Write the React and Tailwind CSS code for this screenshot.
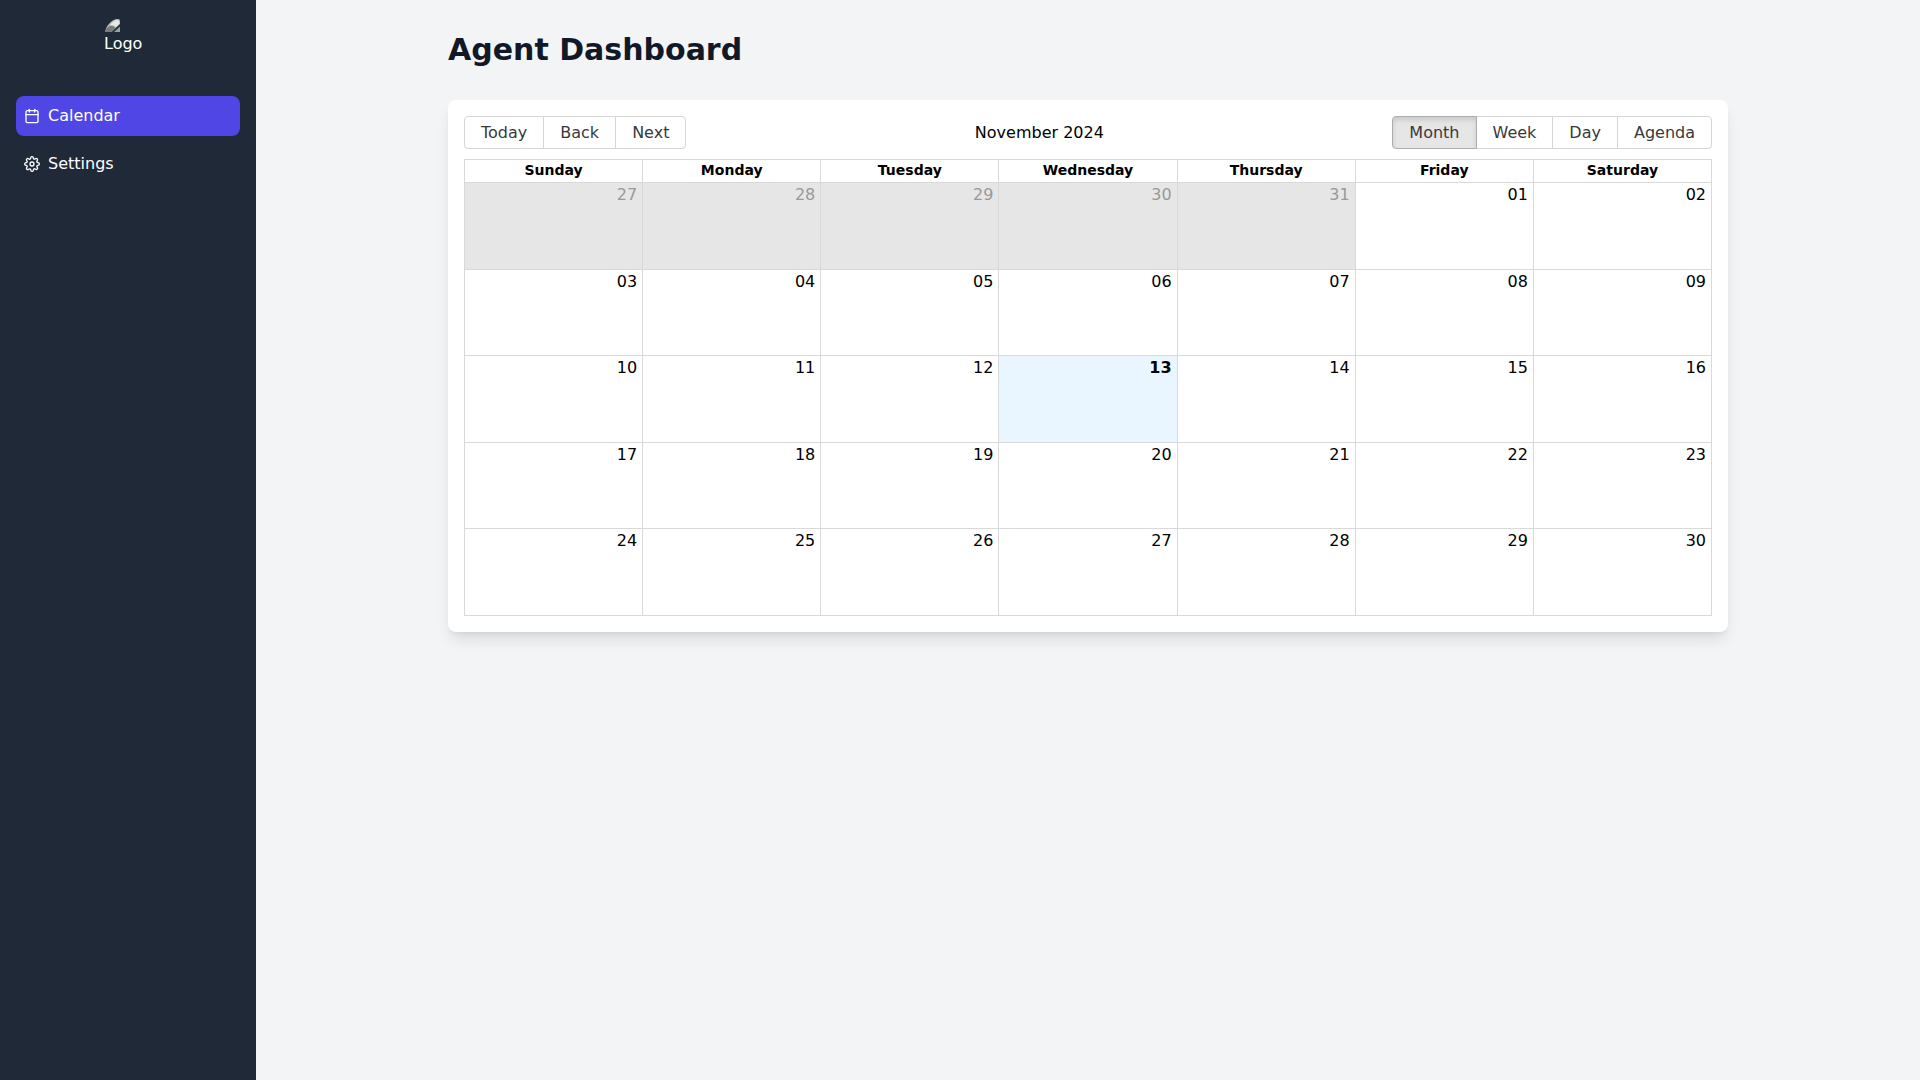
import React, { useState } from 'react';
import { FiCalendar, FiSettings } from 'react-icons/fi';
import clsx from 'clsx';

const weekdays = ['Sunday', 'Monday', 'Tuesday', 'Wednesday', 'Thursday', 'Friday', 'Saturday'];
const views = ['Month', 'Week', 'Day', 'Agenda'];

// Weeks visible for November 2024
const firstVisible = new Date(2024, 9, 27);
const today = new Date(2024, 10, 13);
const weeks = Array.from({ length: 5 }, (_, week) =>
    Array.from({ length: 7 }, (_, day) => {
        const date = new Date(firstVisible);
        date.setDate(date.getDate() + week * 7 + day);
        return date;
    })
);

function Logo() {
    return (
        <div className="w-12 h-12 mx-auto flex flex-col">
            <svg className="w-4 h-4 shrink-0" viewBox="0 0 16 16" aria-hidden="true">
                <path d="M1 16C2 10 7 4 13 3Q16 2.5 16 5V8L7.5 16Z" fill="#b9bcbb" />
                <path d="M6 9C8 6 11 4 14.5 4L15.5 7.5L12 11Q10 8.5 6 9Z" fill="#e6e8e8" />
                <path d="M1 16C2 12.5 4 10 7 10Q10 9.5 11.5 12L7.5 16Z" fill="#777b7a" />
                <path d="M10 16L16 10.5V16Z" fill="#9da1a0" />
            </svg>
            <span>Logo</span>
        </div>
    );
}

function NavItem({ icon: Icon, label, active }) {
    return (
        <a
            href={`#${label.toLowerCase()}`}
            className={clsx('flex items-center gap-2 p-2 rounded-lg', active ? 'bg-[#4f46e5]' : 'hover:bg-[#374151]')}
        >
            <Icon size={16} />
            <span>{label}</span>
        </a>
    );
}

function ToolbarButton({ active, children, ...props }) {
    return (
        <button
            type="button"
            className={clsx(
                'px-4 py-[6px] border leading-[19px] text-[#373a3c] -ml-px first:ml-0 first:rounded-l last:rounded-r',
                active
                    ? 'relative bg-[#e6e6e6] border-[#adadad] shadow-[inset_0_3px_5px_rgba(0,0,0,0.125)]'
                    : 'border-[#d6d6d6]'
            )}
            {...props}
        >
            {children}
        </button>
    );
}

function MonthTable() {
    return (
        <table className="w-full h-full table-fixed border-collapse">
            <thead>
                <tr className="h-[23px]">
                    {weekdays.map((day) => (
                        <th
                            key={day}
                            scope="col"
                            className="p-0 border border-[#d9d9d9] align-top text-[14px] leading-[21px] font-bold"
                        >
                            {day}
                        </th>
                    ))}
                </tr>
            </thead>
            <tbody>
                {weeks.map((week) => (
                    <tr key={week[0].toISOString()}>
                        {week.map((date) => {
                            const isToday = date.getTime() === today.getTime();
                            const offRange = date.getMonth() !== today.getMonth();
                            return (
                                <td
                                    key={date.toISOString()}
                                    className={clsx(
                                        'p-0 pr-[5px] border border-[#d9d9d9] text-right align-top',
                                        offRange && 'bg-[#e6e6e6] text-[#999999]',
                                        isToday && 'bg-[#eaf6ff] font-bold'
                                    )}
                                >
                                    {String(date.getDate()).padStart(2, '0')}
                                </td>
                            );
                        })}
                    </tr>
                ))}
            </tbody>
        </table>
    );
}

export default function App() {
    const [view, setView] = useState('Month');

    return (
        <div className="flex min-h-screen bg-[#f3f4f6] text-black font-['DejaVu_Sans',sans-serif]">
            <aside className="w-64 shrink-0 p-4 bg-[#1f2937] text-white">
                <Logo />
                <nav className="mt-8 flex flex-col gap-2">
                    <NavItem icon={FiCalendar} label="Calendar" active />
                    <NavItem icon={FiSettings} label="Settings" />
                </nav>
            </aside>

            <main className="flex-1 p-8">
                <div className="max-w-7xl mx-auto">
                    <h1 className="mb-8 text-3xl font-bold text-[#111827]">Agent Dashboard</h1>
                    <div className="p-4 bg-white rounded-lg shadow-lg">
                        <div className="flex flex-col h-[500px]">
                            <div className="flex items-center mb-[10px]">
                                <div className="flex">
                                    <ToolbarButton>Today</ToolbarButton>
                                    <ToolbarButton>Back</ToolbarButton>
                                    <ToolbarButton>Next</ToolbarButton>
                                </div>
                                <span className="grow px-[10px] text-center">November 2024</span>
                                <div className="flex">
                                    {views.map((name) => (
                                        <ToolbarButton key={name} active={view === name} onClick={() => setView(name)}>
                                            {name}
                                        </ToolbarButton>
                                    ))}
                                </div>
                            </div>
                            <div className="flex-1 min-h-0">
                                <MonthTable />
                            </div>
                        </div>
                    </div>
                </div>
            </main>
        </div>
    );
}
